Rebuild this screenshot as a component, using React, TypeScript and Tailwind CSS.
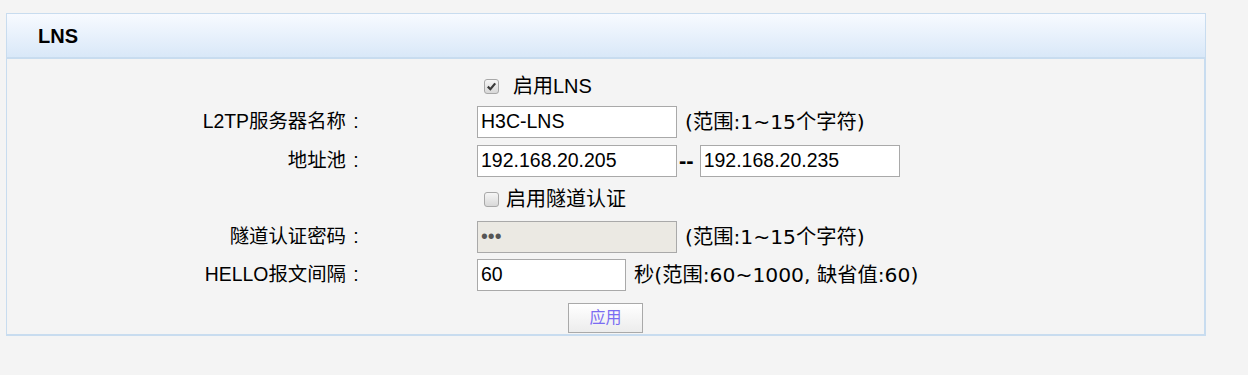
import React from "react";

const font = { fontFamily: '"Liberation Sans", "Noto Sans CJK SC", sans-serif' };
const hint = { fontFamily: '"DejaVu Sans", "Noto Sans CJK SC", sans-serif' };

function Check({ checked }: { checked?: boolean }) {
  return (
    <span className="flex h-[15px] w-[15px] items-center justify-center rounded-[3px] border border-[#a8a8a8] bg-gradient-to-b from-[#f6f6f6] to-[#d8d8d8]">
      {checked && (
        <svg width="11" height="11" viewBox="0 0 11 11">
          <path d="M1.8 5.6 L4.4 8.2 L9.2 2.4" fill="none" stroke="#3a3a3a" strokeWidth="2.2" />
        </svg>
      )}
    </span>
  );
}

function Row({
  label,
  children,
  className = "",
}: {
  label?: string;
  children: React.ReactNode;
  className?: string;
}) {
  return (
    <div className={`flex items-center ${className}`}>
      <div className="w-[359px] shrink-0 text-right text-[19.4px] text-black">
        {label}
        {label && <span className="inline-block w-[20px] text-center">:</span>}
      </div>
      <div className="ml-[111px] flex items-center">{children}</div>
    </div>
  );
}

function Field({ value, w = "w-[200px]", disabled }: { value: string; w?: string; disabled?: boolean }) {
  return (
    <div
      className={`flex h-[32px] ${w} items-center border border-[#a9a9a9] pl-[3px] text-[19.5px] ${
        disabled ? "bg-[#ebe9e3] text-[#555]" : "bg-white text-black"
      }`}
    >
      {value}
    </div>
  );
}

function Hint({ children }: { children: React.ReactNode }) {
  return (
    <span className="ml-[8px] text-[20.3px] text-black" style={hint}>
      {children}
    </span>
  );
}

export default function App() {
  return (
    <div className="min-h-[375px] bg-[#f4f4f4] pt-[13px] pl-[6px]" style={font}>
      <div className="w-[1200px]">
        {/* header */}
        <div className="flex h-[46px] items-center border border-b-2 border-[#c8dcef] bg-gradient-to-b from-[#f7faff] to-[#d9e8f8] pl-[31px]">
          <span className="text-[20px] font-bold text-black">LNS</span>
        </div>

        {/* body */}
        <div className="border-x border-r-2 border-b-2 border-[#c8dcef] bg-[#f4f4f4] pt-[11px] pb-[1px]">
          <Row className="h-[32px]">
            <span className="ml-[7px] flex items-center gap-[14px] text-[20px] text-black">
              <Check checked />
              启用LNS
            </span>
          </Row>
          <Row label="L2TP服务器名称" className="mt-[4px]">
            <Field value="H3C-LNS" />
            <Hint>(范围:1~15个字符)</Hint>
          </Row>
          <Row label="地址池" className="mt-[7px]">
            <Field value="192.168.20.205" />
            <span className="ml-[2px] mr-[6px] text-[22px] leading-none font-bold text-black">--</span>
            <Field value="192.168.20.235" />
          </Row>
          <Row className="h-[44px]">
            <span className="ml-[7px] flex items-center gap-[7px] text-[20px] text-black">
              <Check />
              启用隧道认证
            </span>
          </Row>
          <Row label="隧道认证密码">
            <Field value="•••" disabled />
            <Hint>(范围:1~15个字符)</Hint>
          </Row>
          <Row label="HELLO报文间隔" className="mt-[6px]">
            <Field value="60" w="w-[149px]" />
            <Hint>秒(范围:60~1000, 缺省值:60)</Hint>
          </Row>
          <div className="mt-[12px] flex justify-center">
            <button className="h-[30px] w-[75px] border border-[#a9a9a9] bg-gradient-to-b from-white to-[#ececec] text-[16px] text-[#7a6cf2]">
              应用
            </button>
          </div>
        </div>
      </div>
    </div>
  );
}
